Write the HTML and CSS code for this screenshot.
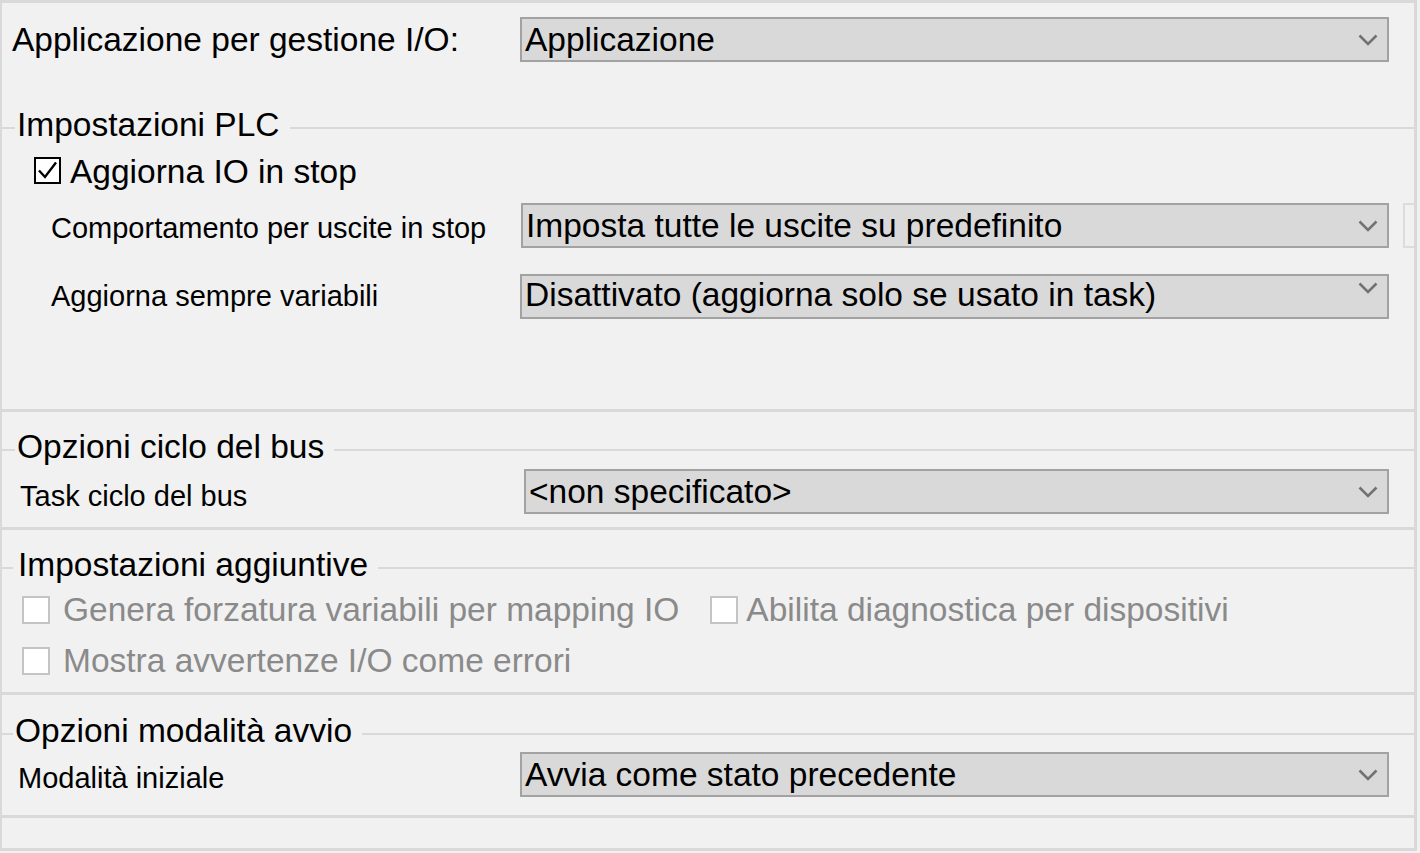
FILE: index.html
```html
<!DOCTYPE html>
<html lang="it">
<head>
    <meta charset="UTF-8">
    <title>Configurazione PLC</title>
    <link rel="stylesheet" href="styles.css">
</head>
<body>
    <div class="panel">
        <!-- impostazioni PLC -->
        <section class="section sec-plc">
            <div class="row row-app">
                <span class="lbl lbl-app">Applicazione per gestione I/O:</span>
                <div class="combo"><span>Applicazione</span><svg class="chev" width="20" height="12" viewBox="0 0 20 12"><polyline points="1.5,1.5 10,10 18.5,1.5"/></svg></div>
            </div>

            <fieldset class="group group-plc">
                <legend>Impostazioni PLC</legend>
                <label class="check check-on">
                    <span class="box"><svg width="23" height="23" viewBox="0 0 23 23"><polyline points="3,11.5 9,18 20,3.5"/></svg></span>
                    Aggiorna IO in stop
                </label>
                <div class="row row-stop">
                    <span class="lbl lbl-sub">Comportamento per uscite in stop</span>
                    <div class="combo combo-stop"><span>Imposta tutte le uscite su predefinito</span><svg class="chev" width="20" height="12" viewBox="0 0 20 12"><polyline points="1.5,1.5 10,10 18.5,1.5"/></svg></div>
                    <span class="side-btn"></span>
                </div>
                <div class="row row-vars">
                    <span class="lbl lbl-sub">Aggiorna sempre variabili</span>
                    <div class="combo combo-top"><span>Disattivato (aggiorna solo se usato in task)</span><svg class="chev" width="20" height="12" viewBox="0 0 20 12"><polyline points="1.5,1.5 10,10 18.5,1.5"/></svg></div>
                </div>
            </fieldset>
        </section>

        <!-- ciclo del bus -->
        <section class="section sec-bus">
            <fieldset class="group">
                <legend>Opzioni ciclo del bus</legend>
                <div class="row row-task">
                    <span class="lbl lbl-task">Task ciclo del bus</span>
                    <div class="combo combo-task"><span>&lt;non specificato&gt;</span><svg class="chev" width="20" height="12" viewBox="0 0 20 12"><polyline points="1.5,1.5 10,10 18.5,1.5"/></svg></div>
                </div>
            </fieldset>
        </section>

        <!-- impostazioni aggiuntive -->
        <section class="section sec-extra">
            <fieldset class="group group-extra">
                <legend>Impostazioni aggiuntive</legend>
                <div class="check-line check-line-first">
                    <label class="check check-off"><span class="box"></span>Genera forzatura variabili per mapping IO</label>
                    <label class="check check-off check-diag"><span class="box"></span>Abilita diagnostica per dispositivi</label>
                </div>
                <div class="check-line">
                    <label class="check check-off"><span class="box"></span>Mostra avvertenze I/O come errori</label>
                </div>
            </fieldset>
        </section>

        <!-- modalita avvio -->
        <section class="section sec-start">
            <fieldset class="group group-start">
                <legend>Opzioni modalità avvio</legend>
                <div class="row row-mode">
                    <span class="lbl lbl-mode">Modalità iniziale</span>
                    <div class="combo"><span>Avvia come stato precedente</span><svg class="chev" width="20" height="12" viewBox="0 0 20 12"><polyline points="1.5,1.5 10,10 18.5,1.5"/></svg></div>
                </div>
            </fieldset>
        </section>

        <section class="section sec-empty"></section>
    </div>
</body>
</html>
```

FILE: styles.css
```css
body {
    margin: 0;
    background-color: #f1f1f1;
    font-family: "Liberation Sans", Arial, sans-serif;
    color: #000;
}
.panel {
    width: 1417px;
    height: 851px;
    box-sizing: border-box;
    border: solid #d9d9d9;
    border-width: 3px 3px 0 2px;
    overflow: hidden;
}
.section {
    box-sizing: border-box;
    border-bottom: 3px solid #d9d9d9;
}
.sec-plc {
    height: 409px;
    padding-top: 14px;
}
.sec-bus {
    height: 118px;
    padding-top: 16px;
}
.sec-extra {
    height: 165px;
    padding-top: 16px;
}
.sec-start {
    height: 123px;
    padding-top: 17px;
}
.sec-empty {
    height: 33px;
}

/* group boxes */
.group {
    margin: 0;
    padding: 0;
    border: 0;
    border-top: 2px solid #d9d9d9;
    min-inline-size: 0;
}
.group legend {
    margin-left: 13px;
    padding: 0 10px 5px 2px;
    font-size: 33.5px;
    line-height: 38px;
}
.group-plc {
    margin-top: 44px;
}
.group-extra legend {
    margin-left: 11px;
    padding-left: 5px;
}
.group-start legend {
    margin-left: 11px;
}

/* rows */
.row {
    display: flex;
    align-items: center;
}
.lbl {
    flex: none;
    box-sizing: border-box;
    width: 518px;
}
.lbl-app {
    padding-left: 10px;
    font-size: 33.5px;
}
.lbl-sub {
    padding-left: 49px;
    font-size: 29px;
}
.lbl-task {
    width: 522px;
    padding: 9px 0 0 18px;
    font-size: 29px;
}
.lbl-mode {
    padding: 8px 0 0 16px;
    font-size: 29px;
}
.row-stop {
    margin-top: 12px;
}
.row-stop .lbl {
    width: 519px;
    padding-top: 5px;
}
.row-vars {
    margin-top: 26px;
}
.row-task {
    margin-top: -2px;
}
.row-mode {
    margin-top: -3px;
}

/* combo boxes */
.combo {
    flex: none;
    box-sizing: border-box;
    width: 869px;
    height: 45px;
    padding: 0 9px 0 3px;
    border: 2px solid #a2a2a2;
    background-color: #d9d9d9;
    display: flex;
    align-items: center;
    justify-content: space-between;
    font-size: 33.5px;
    line-height: 38px;
    white-space: nowrap;
}
.combo-stop {
    width: 868px;
}
.combo-task {
    width: 865px;
}
.combo-top {
    align-items: flex-start;
}
.combo-top .chev {
    margin-top: 6px;
}
.chev {
    flex: none;
}
.chev polyline {
    fill: none;
    stroke: #727272;
    stroke-width: 2.6;
}
.side-btn {
    flex: none;
    width: 30px;
    height: 45px;
    margin-left: 14px;
    box-sizing: border-box;
    border: 2px solid #dcdcdc;
}

/* checkboxes */
.check {
    display: flex;
    align-items: center;
    font-size: 33.5px;
    line-height: 38px;
    white-space: nowrap;
}
.check-on {
    margin-top: 4px;
    margin-left: 32px;
}
.check-on .box {
    width: 27px;
    height: 27px;
    margin: -4px 9px 0 0;
    box-sizing: border-box;
    border: 2px solid #000;
    background-color: #fff;
}
.check-on .box svg {
    display: block;
}
.check-on .box polyline {
    fill: none;
    stroke: #000;
    stroke-width: 2.4;
}
.check-line {
    display: flex;
    margin-top: 13px;
    padding-left: 20px;
}
.check-line-first {
    margin-top: 2px;
}
.check-off {
    color: #8a8a8a;
}
.check-off .box {
    width: 28px;
    height: 28px;
    margin-right: 13px;
    box-sizing: border-box;
    border: 2px solid #c4c4c4;
    background-color: #fff;
}
.check-diag {
    margin-left: 31px;
}
.check-diag .box {
    margin-right: 8px;
}
```
